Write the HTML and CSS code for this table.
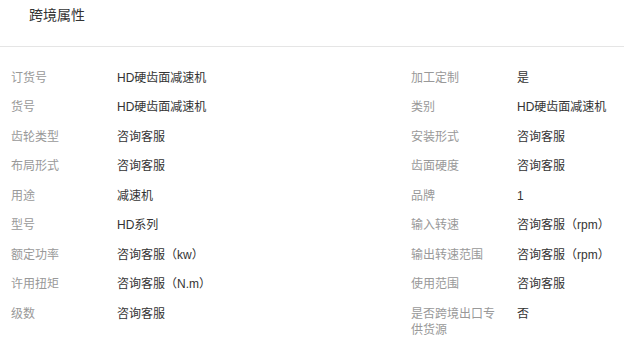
FILE: index.html
```html
<!DOCTYPE html>
<html lang="zh-CN">
<head>
<meta charset="utf-8">
<link rel="stylesheet" href="styles.css">
</head>
<body>
<div class="panel">
  <div class="panel-head">跨境属性</div>
  <div class="attrs">
    <div class="attr"><span class="k">订货号</span><span class="v">HD硬齿面减速机</span></div>
    <div class="attr"><span class="k">加工定制</span><span class="v">是</span></div>
    <div class="attr"><span class="k">货号</span><span class="v">HD硬齿面减速机</span></div>
    <div class="attr"><span class="k">类别</span><span class="v">HD硬齿面减速机</span></div>
    <div class="attr"><span class="k">齿轮类型</span><span class="v">咨询客服</span></div>
    <div class="attr"><span class="k">安装形式</span><span class="v">咨询客服</span></div>
    <div class="attr"><span class="k">布局形式</span><span class="v">咨询客服</span></div>
    <div class="attr"><span class="k">齿面硬度</span><span class="v">咨询客服</span></div>
    <div class="attr"><span class="k">用途</span><span class="v">减速机</span></div>
    <div class="attr"><span class="k">品牌</span><span class="v">1</span></div>
    <div class="attr"><span class="k">型号</span><span class="v">HD系列</span></div>
    <div class="attr"><span class="k">输入转速</span><span class="v">咨询客服（rpm）</span></div>
    <div class="attr"><span class="k">额定功率</span><span class="v">咨询客服（kw）</span></div>
    <div class="attr"><span class="k">输出转速范围</span><span class="v">咨询客服（rpm）</span></div>
    <div class="attr"><span class="k">许用扭矩</span><span class="v">咨询客服（N.m）</span></div>
    <div class="attr"><span class="k">使用范围</span><span class="v">咨询客服</span></div>
    <div class="attr"><span class="k">级数</span><span class="v">咨询客服</span></div>
    <div class="attr"><span class="k">是否跨境出口专供货源</span><span class="v">否</span></div>
  </div>
</div>
</body>
</html>
```
FILE: styles.css
```css
html, body {
  margin: 0;
  padding: 0;
  background: #fff;
}
body {
  font-family: "Liberation Sans", "Noto Sans CJK SC", sans-serif;
  color: #333;
}
.panel-head {
  height: 47px;
  box-sizing: border-box;
  padding: 6px 0 0 29px;
  font-size: 14px;
  line-height: 18px;
  color: #333;
  border-bottom: 1px solid #e5e5e5;
}
.attrs {
  display: grid;
  grid-template-columns: 400px 1fr;
  padding: 16px 0 0 11px;
}
.attr {
  display: flex;
  align-items: flex-start;
  font-size: 12px;
  line-height: 16px;
  padding: 6.75px 0;
}
.k {
  flex: 0 0 90px;
  margin-right: 16px;
  color: #999;
}
.v {
  color: #333;
}
```
